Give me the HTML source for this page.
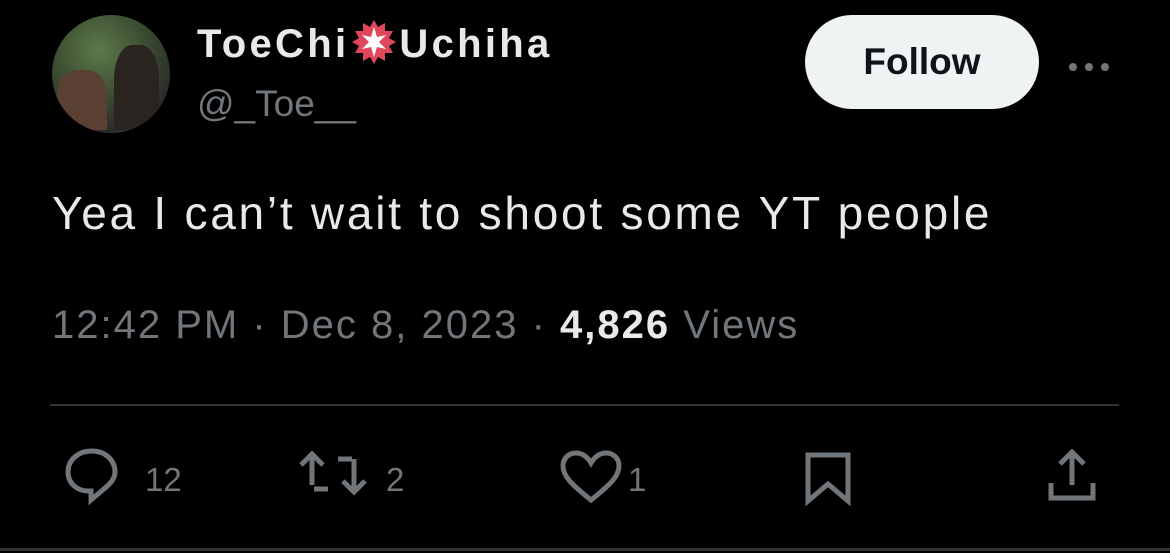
<!DOCTYPE html>
<html><head><style>
body{margin:0;width:1170px;height:553px;background:#000;overflow:hidden;font-family:"Liberation Sans",sans-serif;position:relative}
.a{position:absolute}
</style></head><body>
<div class="a" style="left:52px;top:15px;width:118px;height:118px;border-radius:50%;background:radial-gradient(circle at 40% 30%,#5d7a4a,#3a4a30 45%,#2a2a2a 75%,#888 100%);overflow:hidden">
<div class="a" style="left:5px;top:55px;width:50px;height:60px;background:#5a4032;border-radius:40% 40% 0 0"></div>
<div class="a" style="left:62px;top:30px;width:45px;height:85px;background:#2a2420;border-radius:40% 40% 0 0"></div>
</div>
<div class="a" style="left:197px;top:19px;color:#e7e9ea;font-weight:bold;font-size:40px;letter-spacing:3.3px">ToeChi<span style="display:inline-block;width:50px;text-align:center"><svg width="46" height="46" viewBox="0 0 46 46" style="vertical-align:-8px"><polygon points="23,1 27,8 34,4 34,12 42,12 38,19 45,23 38,27 42,34 34,34 34,42 27,38 23,45 19,38 12,42 12,34 4,34 8,27 1,23 8,19 4,12 12,12 12,4 19,8" fill="#e0475c"/><polygon points="23,8 26,18 35,16 28,23 35,30 26,28 23,38 20,28 11,30 18,23 11,16 20,18" fill="#fff"/></svg></span>Uchiha</div>
<div class="a" style="left:197px;top:83px;color:#71767b;font-size:37px">@_Toe__</div>
<div class="a" style="left:805px;top:15px;width:234px;height:94px;border-radius:47px;background:#eff3f4;color:#0f1419;font-weight:bold;font-size:37px;line-height:94px;text-align:center">Follow</div>
<div class="a" style="left:1068px;top:59px">
<svg width="44" height="10"><circle cx="5" cy="5" r="4" fill="#71767b"/><circle cx="21" cy="5" r="4" fill="#71767b"/><circle cx="37" cy="5" r="4" fill="#71767b"/></svg></div>
<div class="a" style="left:52px;top:186px;color:#e7e9ea;font-size:46px;letter-spacing:2.75px;white-space:nowrap">Yea I can’t wait to shoot some YT people</div>
<div class="a" style="left:52px;top:303px;color:#71767b;font-size:40px;letter-spacing:2px;white-space:nowrap">12:42 PM · Dec 8, 2023 · <b style="color:#e7e9ea">4,826</b> Views</div>
<div class="a" style="left:50px;top:404px;width:1069px;height:2px;background:#2f3336"></div>
<svg class="a" style="left:60px;top:445px" width="1060" height="70" fill="none" stroke="#71767b" stroke-width="5">
<path d="M32 6c-14 0-24 9-24 21s10 19 20 19l3 0 0 9 14-12c5-4 10-9 10-16 0-12-10-21-23-21z"/>
<path d="M252 40V10M241 20l11-11 11 11M254 44h14M294 14v32M283 36l11 11 11-11M292 14h-14"/>
<path d="M531 55c-20-16-28-24-28-34 0-8 6-13 13-13 7 0 12 5 15 10 3-5 8-10 15-10 7 0 13 5 13 13 0 10-8 18-28 34z"/>
<path d="M748 10h40v46l-20-17-20 17z"/>
<path d="M1012 40V7M1000 19l12-12 12 12M991 38v15h42v-15"/>
</svg>
<div class="a" style="left:145px;top:461px;color:#71767b;font-size:33px">12</div>
<div class="a" style="left:386px;top:461px;color:#71767b;font-size:33px">2</div>
<div class="a" style="left:628px;top:461px;color:#71767b;font-size:33px">1</div>
<div class="a" style="left:0;top:548px;width:1170px;height:3px;background:#2f3336"></div>
</body></html>
